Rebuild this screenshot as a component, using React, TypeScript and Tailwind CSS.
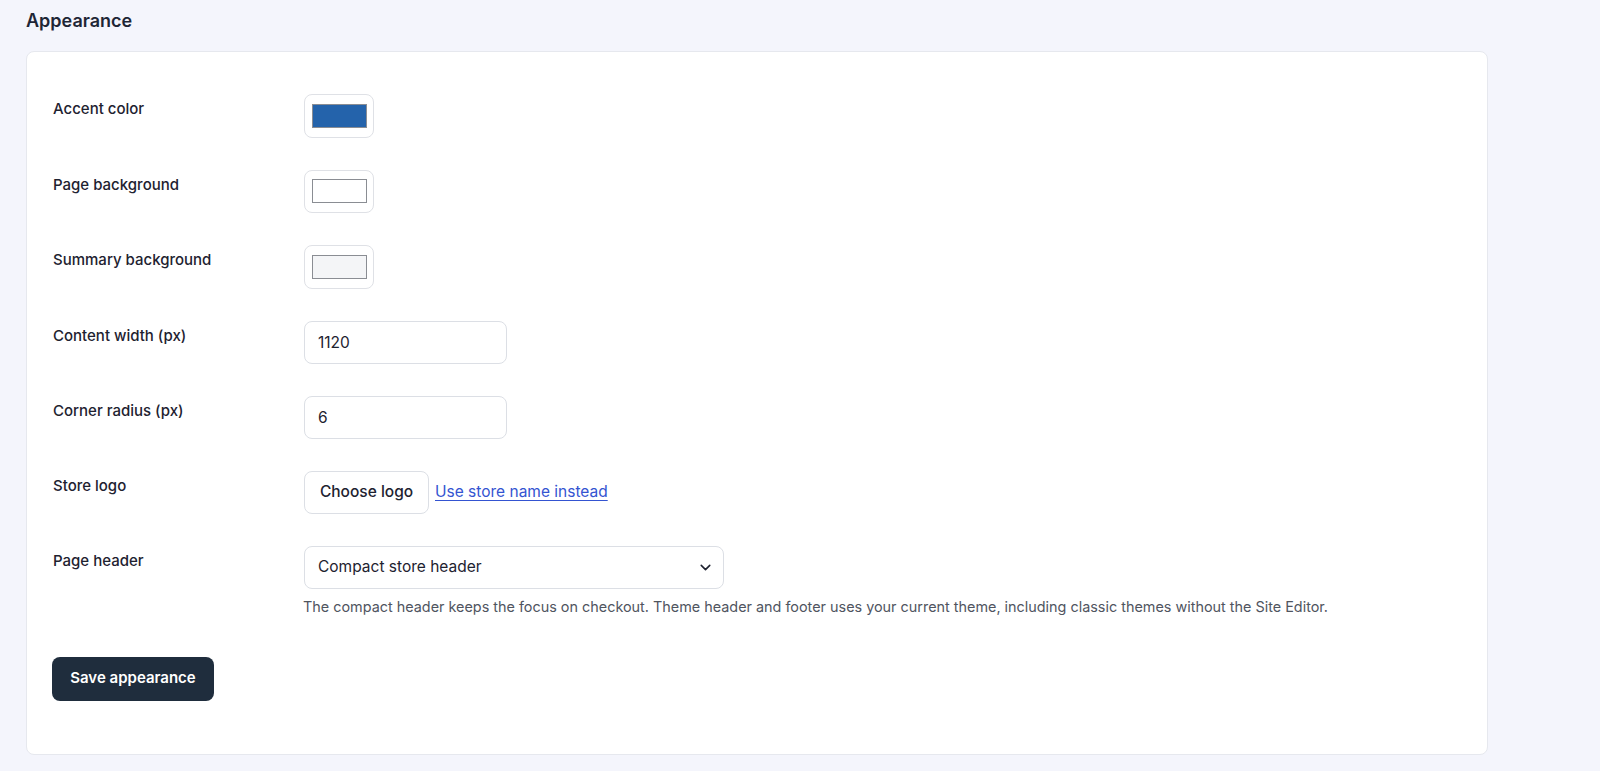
import {ChevronDown} from "lucide-react";

interface SwatchProps {
  color: string;
}
const Swatch = ({color}: SwatchProps) => {
  return (
    <button
      type="button"
      className="flex h-[43.5px] w-[70px] items-center justify-center rounded-lg border border-[#dfe1e6] bg-white"
    >
      <span
        className="block h-[24px] w-[55px] border border-[#8a8d93]"
        style={{backgroundColor: color}}
      />
    </button>
  );
};

const Row = ({label, children}: {label: string; children: React.ReactNode}) => {
  return (
    <div className="flex py-4">
      <div className="w-[252px] shrink-0 pl-px pt-[5px] text-[15px] font-medium leading-5 text-[#1e2230]">
        {label}
      </div>
      <div className="flex-1">{children}</div>
    </div>
  );
};

const textInput =
  "h-[43px] w-[203px] rounded-lg border border-[#dcdfe5] bg-white px-[13px] text-[15.5px] text-[#1e2230] outline-none";

const App = () => {
  return (
    <div className="min-h-[771px] bg-[#f4f5fc] pl-[26px] pt-[9px] font-['Inter',sans-serif]">
      <h2 className="text-[18px] font-semibold leading-6 text-[#1e2636]">Appearance</h2>
      <div className="mt-[18px] w-[1462px] rounded-lg border border-[#e6e8ee] bg-white px-[25px] pt-[26px] pb-[53px]">
        <Row label="Accent color">
          <Swatch color="#2463ab" />
        </Row>
        <Row label="Page background">
          <Swatch color="#ffffff" />
        </Row>
        <Row label="Summary background">
          <Swatch color="#f4f5f7" />
        </Row>
        <Row label="Content width (px)">
          <input className={textInput} defaultValue="1120" />
        </Row>
        <Row label="Corner radius (px)">
          <input className={textInput} defaultValue="6" />
        </Row>
        <Row label="Store logo">
          <div className="flex items-center gap-[6px]">
            <button
              type="button"
              className="h-[43px] w-[125px] rounded-lg border border-[#dcdfe5] bg-white text-[15.5px] font-medium text-[#1e2230]"
            >
              Choose logo
            </button>
            <a href="#" className="text-[15.5px] text-[#3454d1] underline underline-offset-[3px]">
              Use store name instead
            </a>
          </div>
        </Row>
        <Row label="Page header">
          <div className="flex h-[43px] w-[420px] items-center justify-between rounded-lg border border-[#dcdfe5] bg-white pl-[13px] pr-[9px] text-[15.5px] text-[#1e2230]">
            <span>Compact store header</span>
            <ChevronDown size={17} strokeWidth={2.2} className="text-[#1e2230]" />
          </div>
          <p className="mt-[8px] -ml-px text-[14.4px] leading-5 text-[#50555f]">
            The compact header keeps the focus on checkout. Theme header and footer uses your current theme, including classic themes without the Site Editor.
          </p>
        </Row>
        <div className="mt-[24px]">
          <button
            type="button"
            className="h-[44px] w-[162px] rounded-lg bg-[#1f2d3d] text-[15px] font-semibold text-white"
          >
            Save appearance
          </button>
        </div>
      </div>
    </div>
  );
};

export default App;
